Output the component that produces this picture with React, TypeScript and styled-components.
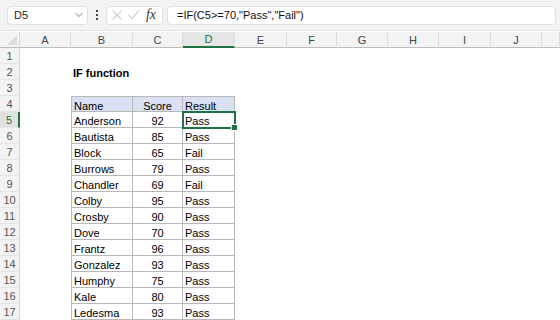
import styled, { createGlobalStyle } from 'styled-components'
import { ChevronDown } from 'lucide-react'

const GlobalStyle = createGlobalStyle`
  body {
    margin: 0;
    background: #fff;
    font-family: 'Liberation Sans', Arial, sans-serif;
  }
`

const COLS = ['A', 'B', 'C', 'D', 'E', 'F', 'G', 'H', 'I', 'J', '']
const WIDTHS = [51, 62, 50, 52, 52, 50, 51, 51, 52, 51]

const rows: [string, number, string][] = [
  ['Anderson', 92, 'Pass'],
  ['Bautista', 85, 'Pass'],
  ['Block', 65, 'Fail'],
  ['Burrows', 79, 'Pass'],
  ['Chandler', 69, 'Fail'],
  ['Colby', 95, 'Pass'],
  ['Crosby', 90, 'Pass'],
  ['Dove', 70, 'Pass'],
  ['Frantz', 96, 'Pass'],
  ['Gonzalez', 93, 'Pass'],
  ['Humphy', 75, 'Pass'],
  ['Kale', 80, 'Pass'],
  ['Ledesma', 93, 'Pass'],
]

const Page = styled.div`
  width: 560px;
  height: 320px;
  overflow: hidden;
`

const FormulaBar = styled.div`
  height: 31px;
  box-sizing: border-box;
  display: flex;
  align-items: center;
  padding: 0 4px 0 7px;
  background: #f3f3f3;
  border-bottom: 1px solid #e3e3e3;
`

const Box = styled.div<{ $w?: number; $grow?: boolean }>`
  height: 19px;
  box-sizing: border-box;
  background: #fff;
  border: 1px solid #e1e1e1;
  border-radius: 4px;
  display: flex;
  align-items: center;
  width: ${(p) => (p.$w ? `${p.$w}px` : 'auto')};
  flex: ${(p) => (p.$grow ? 1 : 'none')};
  font-size: 11px;
  color: #222;
`

const NameText = styled.span`
  flex: 1;
  padding-left: 6px;
`

const Chevron = styled(ChevronDown)`
  margin-right: 2px;
  color: #555;
`

const Dots = styled.div`
  width: 18px;
  display: flex;
  flex-direction: column;
  align-items: center;
  gap: 2px;
  span {
    width: 2px;
    height: 2px;
    background: #444;
  }
`

const Fx = styled.span`
  font-family: 'Liberation Serif', 'Times New Roman', serif;
  font-style: italic;
  font-size: 14px;
  color: #333;
  margin-left: auto;
  margin-right: 6px;
`

const Formula = styled.span`
  padding-left: 9px;
  font-size: 11px;
  color: #111;
`

const Gap = styled.div`
  width: 4px;
`

const Sheet = styled.div`
  display: grid;
  grid-template-columns: 20px ${WIDTHS.map((w) => `${w}px`).join(' ')} 1fr;
  grid-auto-rows: 16px;
  margin-top: 1px;
  font-size: 11px;
`

const Corner = styled.div`
  background: #f3f3f3;
  border-right: 1px solid #d6d6d6;
  border-bottom: 1px solid #bdbdbd;
  box-sizing: border-box;
  position: relative;
  &::after {
    content: '';
    position: absolute;
    right: 2px;
    bottom: 2px;
    border-left: 10px solid transparent;
    border-bottom: 10px solid #dcdcdc;
  }
`

const ColHead = styled.div<{ $active?: boolean }>`
  box-sizing: border-box;
  background: ${(p) => (p.$active ? '#e6e6e6' : '#f3f3f3')};
  border-right: 1px solid #dcdcdc;
  border-bottom: ${(p) => (p.$active ? '2px solid #217346' : '1px solid #bdbdbd')};
  color: ${(p) => (p.$active ? '#217346' : '#444')};
  display: flex;
  align-items: center;
  justify-content: center;
`

const RowHead = styled.div<{ $active?: boolean }>`
  box-sizing: border-box;
  background: ${(p) => (p.$active ? '#e1e1e1' : '#f3f3f3')};
  border-right: ${(p) => (p.$active ? '2px solid #217346' : '1px solid #d6d6d6')};
  border-bottom: 1px solid #e4e4e4;
  color: ${(p) => (p.$active ? '#217346' : '#555')};
  display: flex;
  align-items: center;
  justify-content: center;
`

const Cell = styled.div<{
  $box?: boolean
  $head?: boolean
  $center?: boolean
  $bold?: boolean
  $left?: boolean
  $top?: boolean
  $selected?: boolean
}>`
  box-sizing: border-box;
  position: relative;
  white-space: nowrap;
  line-height: 15px;
  padding: 2px 2px 0;
  color: #000;
  font-weight: ${(p) => (p.$bold ? 700 : 400)};
  text-align: ${(p) => (p.$center ? 'center' : 'left')};
  background: ${(p) => (p.$head ? '#d9e1f2' : '#fff')};
  border-right: ${(p) => (p.$box ? '1px solid #b8b8b8' : 'none')};
  border-bottom: ${(p) => (p.$box ? '1px solid #b8b8b8' : 'none')};
  border-left: ${(p) => (p.$left ? '1px solid #b8b8b8' : 'none')};
  border-top: ${(p) => (p.$top ? '1px solid #b8b8b8' : 'none')};
  ${(p) =>
    p.$selected &&
    `
    outline: 2px solid #217346;
    outline-offset: -1px;
    z-index: 1;
    &::after {
      content: '';
      position: absolute;
      right: -4px;
      bottom: -4px;
      width: 5px;
      height: 5px;
      background: #217346;
      border: 1px solid #fff;
    }
  `}
`

const Blank = () => <Cell />

function Row({ n }: { n: number }) {
  const data = n >= 5 ? rows[n - 5] : null
  const extra = Array.from({ length: 7 }, (_, i) => <Blank key={`x${i}`} />)
  return (
    <>
      <RowHead $active={n === 5}>{n}</RowHead>
      <Blank />
      {n === 2 && (
        <>
          <Cell $bold>IF function</Cell>
          <Blank />
          <Blank />
        </>
      )}
      {n === 4 && (
        <>
          <Cell $box $head $left $top>
            Name
          </Cell>
          <Cell $box $head $top $center>
            Score
          </Cell>
          <Cell $box $head $top>
            Result
          </Cell>
        </>
      )}
      {data && (
        <>
          <Cell $box $left>
            {data[0]}
          </Cell>
          <Cell $box $center>
            {data[1]}
          </Cell>
          <Cell $box $selected={n === 5}>
            {data[2]}
          </Cell>
        </>
      )}
      {(n === 1 || n === 3) && (
        <>
          <Blank />
          <Blank />
          <Blank />
        </>
      )}
      {extra}
    </>
  )
}

export default function App() {
  return (
    <Page>
      <GlobalStyle />
      <FormulaBar>
        <Box $w={81}>
          <NameText>D5</NameText>
          <Chevron size={12} strokeWidth={1.5} />
        </Box>
        <Dots>
          <span />
          <span />
          <span />
        </Dots>
        <Box $w={57}>
          <svg width="40" height="14" viewBox="0 0 40 14" style={{ marginLeft: 4 }}>
            <path d="M2 2 L12 12 M12 2 L2 12" stroke="#c8c8c8" strokeWidth="1.2" fill="none" />
            <path d="M20 7 L24 11 L32 2" stroke="#c8c8c8" strokeWidth="1.2" fill="none" />
          </svg>
          <Fx>fx</Fx>
        </Box>
        <Gap />
        <Box $grow>
          <Formula>=IF(C5&gt;=70,"Pass","Fail")</Formula>
        </Box>
      </FormulaBar>
      <Sheet>
        <Corner />
        {COLS.map((c) => (
          <ColHead key={c || 'k'} $active={c === 'D'}>
            {c}
          </ColHead>
        ))}
        {Array.from({ length: 17 }, (_, i) => (
          <Row key={i} n={i + 1} />
        ))}
      </Sheet>
    </Page>
  )
}
